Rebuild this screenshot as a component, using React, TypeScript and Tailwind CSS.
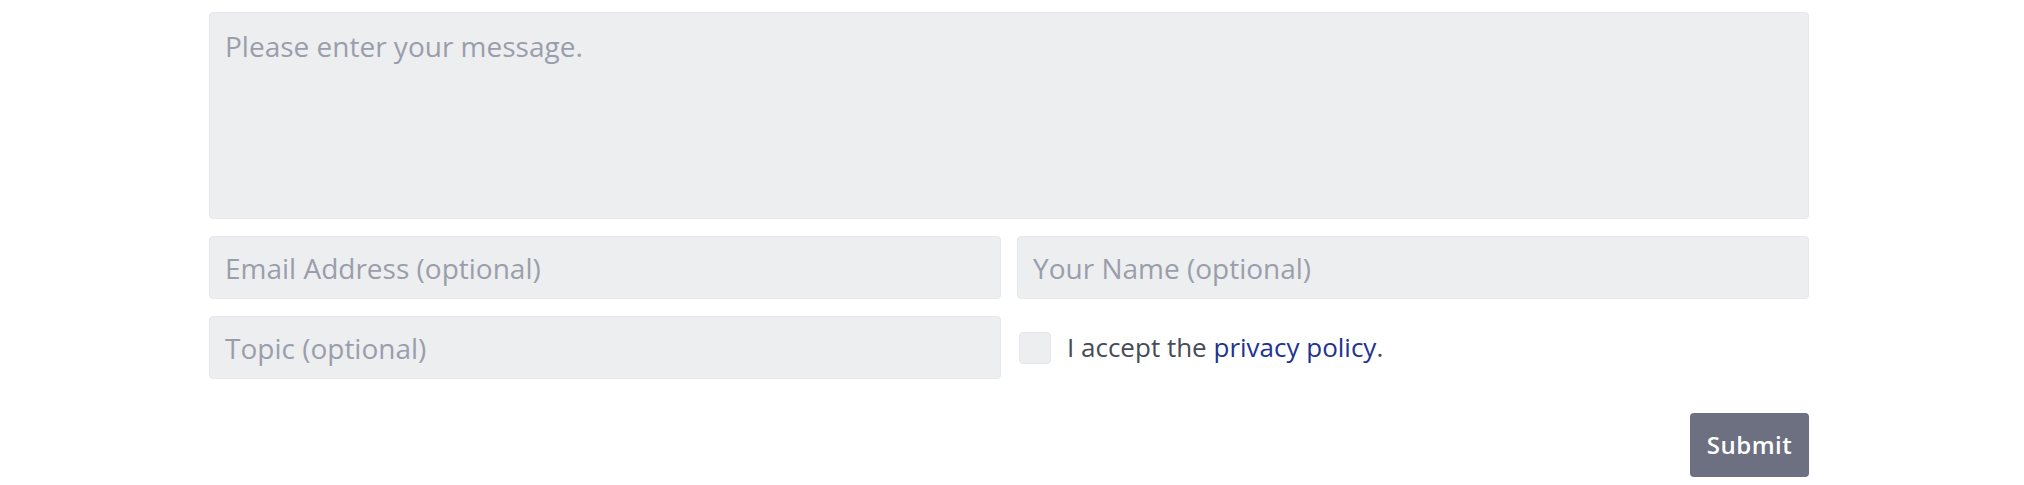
export default function App() {
  return (
    <div className="min-h-[485px] bg-white pl-[209px] pt-[12px]" style={{ fontFamily: '"Open Sans", sans-serif' }}>
      <form className="flex w-[1600px] flex-col" onSubmit={(e) => e.preventDefault()}>
        <textarea
          placeholder="Please enter your message."
          className="h-[207px] w-full resize-none rounded-[4px] border border-[#e6e7ea] bg-[#edeef0] px-[15px] pt-[12px] text-[28px] leading-[42px] text-[#3d4252] placeholder:text-[#9a9eac] outline-none"
        />
        <div className="mt-[17px] grid grid-cols-2 gap-x-[16px] gap-y-[17px]">
          <input
            placeholder="Email Address (optional)"
            className="h-[63px] rounded-[4px] border border-[#e6e7ea] bg-[#edeef0] px-[15px] text-[28px] text-[#3d4252] placeholder:text-[#9a9eac] outline-none"
          />
          <input
            placeholder="Your Name (optional)"
            className="h-[63px] rounded-[4px] border border-[#e6e7ea] bg-[#edeef0] px-[15px] text-[28px] text-[#3d4252] placeholder:text-[#9a9eac] outline-none"
          />
          <input
            placeholder="Topic (optional)"
            className="h-[63px] rounded-[4px] border border-[#e6e7ea] bg-[#edeef0] px-[15px] text-[28px] text-[#3d4252] placeholder:text-[#9a9eac] outline-none"
          />
          <label className="flex items-center gap-[16px] pl-[2px] text-[26px] text-[#474b57]">
            <span className="h-[32px] w-[32px] shrink-0 rounded-[4px] border border-[#e6e7ea] bg-[#edeef0]" />
            <span>
              I accept the <a href="#" className="text-[#22338f]">privacy policy</a>.
            </span>
          </label>
        </div>
        <div className="mt-[34px] flex justify-end">
          <button
            type="submit"
            className="h-[64px] w-[119px] rounded-[4px] bg-[#6c7080] text-[24px] font-semibold tracking-[0.5px] text-white"
          >
            Submit
          </button>
        </div>
      </form>
    </div>
  );
}
